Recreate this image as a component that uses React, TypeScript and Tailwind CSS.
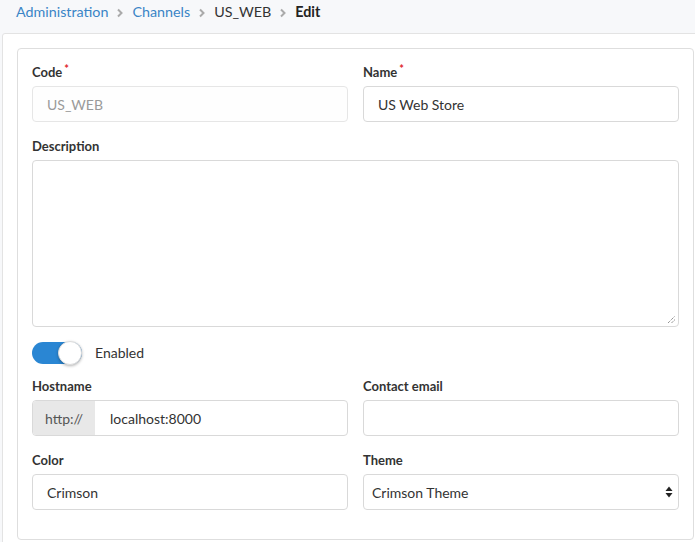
import React from "react";

const Label = ({ text, required }: { text: string; required?: boolean }) => (
  <div className="h-[20px] leading-[20px] mb-[4px] text-[13px] font-bold text-[#333] flex items-start">
    <span>{text}</span>
    {required && <span className="text-[#e0262b] text-[11px] leading-[12px] ml-[2px] mt-[1px]">*</span>}
  </div>
);

const Chevron = () => (
  <svg width="8" height="10" viewBox="0 0 8 10" className="mx-[8px] mt-[1px]">
    <path d="M2 1.5 L5.5 5 L2 8.5" stroke="#aaaaaa" strokeWidth="2" fill="none" />
  </svg>
);

export default function App() {
  return (
    <div
      className="w-[695px] h-[542px] overflow-hidden bg-[#f7f8fa] text-[#333]"
      style={{ fontFamily: "Lato, 'Open Sans', sans-serif" }}
    >
      <div className="h-[33px] pl-[16px] flex items-center leading-[20px] text-[14.3px] pb-[9px]">
        <span className="text-[#3a85c6]">Administration</span>
        <Chevron />
        <span className="text-[#3a85c6]">Channels</span>
        <Chevron />
        <span className="text-[#333]">US_WEB</span>
        <Chevron />
        <span className="text-[#222] font-bold">Edit</span>
      </div>
      <div className="ml-[2px] w-[740px] border border-[#e3e3e3] rounded-[3px] bg-white pl-[14px] pt-[14px] pb-[40px]">
        <div className="w-[677px] border border-[#dedede] rounded-[4px] bg-white px-[14px] pt-[13px] pb-[29px]">
          <div className="grid grid-cols-2 gap-x-[15px]">
            <div>
              <Label text="Code" required />
              <div className="h-[36px] border border-[#e6e6e6] rounded-[4px] bg-[#fefefe] pl-[14px] flex items-center text-[14px] text-[#9a9a9a]">
                US_WEB
              </div>
            </div>
            <div>
              <Label text="Name" required />
              <div className="h-[36px] border border-[#d9d9d9] rounded-[4px] bg-white pl-[14px] flex items-center text-[14px] text-[#333]">
                US Web Store
              </div>
            </div>
          </div>
          <div className="mt-[14px]">
            <Label text="Description" />
            <div className="relative h-[167px] border border-[#d9d9d9] rounded-[4px] bg-white">
              <svg width="9" height="9" viewBox="0 0 9 9" className="absolute right-[2px] bottom-[2px]">
                <path d="M1 8 L8 1 M4.5 8 L8 4.5" stroke="#666" strokeWidth="1" strokeDasharray="1 1" fill="none" />
              </svg>
            </div>
          </div>
          <div className="mt-[15px] flex items-center h-[22px]">
            <div className="relative w-[50px] h-[22px] rounded-full bg-[#2a86d3]">
              <div className="absolute right-0 top-[-1px] w-[24px] h-[24px] rounded-full bg-white border border-[#dcdcdc] shadow-[0_1px_3px_rgba(0,0,0,0.3)]" />
            </div>
            <span className="ml-[13px] text-[14px] text-[#333] -mt-[1px]">Enabled</span>
          </div>
          <div className="mt-[12px] grid grid-cols-2 gap-x-[15px]">
            <div>
              <Label text="Hostname" />
              <div className="h-[36px] border border-[#d9d9d9] rounded-[4px] bg-white flex overflow-hidden text-[14px]">
                <div className="w-[62px] bg-[#e8e8e8] flex items-center justify-center text-[#555]">http://</div>
                <div className="pl-[15px] flex items-center text-[#333]">localhost:8000</div>
              </div>
            </div>
            <div>
              <Label text="Contact email" />
              <div className="h-[36px] border border-[#d9d9d9] rounded-[4px] bg-white" />
            </div>
          </div>
          <div className="mt-[14px] grid grid-cols-2 gap-x-[15px]">
            <div>
              <Label text="Color" />
              <div className="h-[36px] border border-[#d9d9d9] rounded-[4px] bg-white pl-[14px] flex items-center text-[14px] text-[#333]">
                Crimson
              </div>
            </div>
            <div>
              <Label text="Theme" />
              <div className="h-[36px] border border-[#d9d9d9] rounded-[4px] bg-white pl-[8px] pr-[5px] flex items-center justify-between text-[14px] text-[#333]">
                <span>Crimson Theme</span>
                <svg width="8" height="12" viewBox="0 0 8 12">
                  <path d="M4 0.5 L7.5 5 L0.5 5 Z" fill="#222" />
                  <path d="M4 11.5 L7.5 7 L0.5 7 Z" fill="#222" />
                </svg>
              </div>
            </div>
          </div>
        </div>
      </div>
    </div>
  );
}
